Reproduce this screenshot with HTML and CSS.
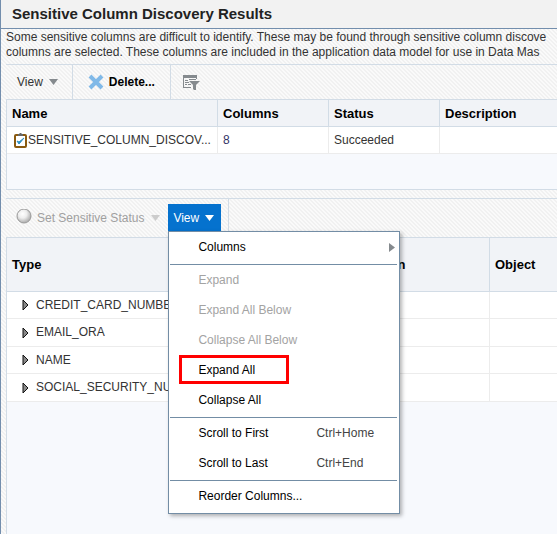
FILE: index.html
```html
<!DOCTYPE html>
<html lang="en">
<head>
<meta charset="utf-8">
<title>Sensitive Column Discovery Results</title>
<link rel="stylesheet" href="styles.css">
</head>
<body>
<main class="page">
  <header class="title-bar"><h1>Sensitive Column Discovery Results</h1></header>
  <p class="intro">Some sensitive columns are difficult to identify. These may be found through sensitive column discove<br>columns are selected. These columns are included in the application data model for use in Data Mas</p>

  <section class="panel">
    <div class="toolbar">
      <button class="tool tool-view" type="button">View
        <svg class="caret" width="9" height="6" viewBox="0 0 9 6" aria-hidden="true"><path d="M0 0h9L4.500 6z" fill="#858a8e"/></svg>
      </button>
      <button class="tool tool-delete" type="button">
        <svg width="16" height="16" viewBox="0 0 16 16" aria-hidden="true"><path d="M2 2l12 12M14 2L2 14" stroke="#80b9e8" stroke-width="4" fill="none"/></svg>
        Delete...
      </button>
      <button class="tool tool-filter" type="button" aria-label="Query by example">
        <svg width="17" height="16" viewBox="0 0 17 16" aria-hidden="true"><g fill="#858a8e"><path d="M0 1h14v3H0z"/><path d="M0 4h1v10H0zM13 4h1v1h-1zM0 13h8v1H0zM2 6h3v1H2zM6 5h7v1H6zM2 8h4v1H2zM2 10h2v1H2zM5 10h3v1H5z"/><path d="M6 7h11l-4 4v5h-2l-1-1v-4z"/></g></svg>
      </button>
    </div>
    <table class="grid jobs">
      <colgroup><col class="c-name"><col class="c-mid"><col class="c-mid"><col></colgroup>
      <thead><tr><th scope="col">Name</th><th scope="col">Columns</th><th scope="col">Status</th><th scope="col">Description</th></tr></thead>
      <tbody><tr>
        <td><div class="job">
          <svg width="13" height="15" viewBox="0 0 13 15" aria-hidden="true"><rect x="1" y="2" width="11" height="12" rx="1" fill="#fff" stroke="#8a5a10" stroke-width="2"/><path d="M4 3V1h1l1-1h1l1 1h1v2z" fill="#666"/><path d="M3 8l2 3 5-6-5 4z" fill="#2d8fc0" stroke="#2d8fc0"/></svg>
          <span>SENSITIVE_COLUMN_DISCOV...</span></div></td>
        <td><a href="#">8</a></td><td>Succeeded</td><td></td>
      </tr></tbody>
    </table>
    <div class="rest"></div>
  </section>

  <section class="panel results">
    <div class="toolbar toolbar-results">
      <button class="tool tool-status" type="button" disabled>
        <svg width="16" height="18" viewBox="0 0 16 18" aria-hidden="true"><defs><radialGradient id="ball" cx=".4" cy=".35" r=".6"><stop offset="0" stop-color="#fff"/><stop offset=".5" stop-color="#eee"/><stop offset="1" stop-color="#b5b5b5"/></radialGradient></defs><circle cx="8" cy="7" r="7" fill="url(#ball)" stroke="#999"/></svg>
        Set Sensitive Status
        <svg class="caret" width="9" height="6" viewBox="0 0 9 6" aria-hidden="true"><path d="M0 0h9L4.500 6z" fill="#ccc"/></svg>
      </button>
      <div class="menu-anchor">
        <button class="tool-open" type="button" aria-expanded="true">View
          <svg class="caret" width="9" height="6" viewBox="0 0 9 6" aria-hidden="true"><path d="M0 0h9L4.500 6z" fill="#fff"/></svg>
        </button>
        <div class="menu">
          <button type="button">Columns <svg class="more" width="6" height="9" viewBox="0 0 6 9" aria-hidden="true"><path d="M0 0v9l6-4.500z" fill="#858a8e"/></svg></button>
          <hr>
          <button type="button" disabled>Expand</button>
          <button type="button" disabled>Expand All Below</button>
          <button type="button" disabled>Collapse All Below</button>
          <button type="button" class="marked">Expand All</button>
          <button type="button">Collapse All</button>
          <hr>
          <button type="button"><span class="label">Scroll to First</span><kbd>Ctrl+Home</kbd></button>
          <button type="button"><span class="label">Scroll to Last</span><kbd>Ctrl+End</kbd></button>
          <hr>
          <button type="button">Reorder Columns...</button>
        </div>
      </div>
    </div>
    <table class="grid types">
      <colgroup><col class="c-type"><col class="c-desc"><col></colgroup>
      <thead><tr><th scope="col">Type</th><th scope="col">Description</th><th scope="col">Object</th></tr></thead>
      <tbody>
        <tr><td><div class="node"><svg width="7" height="12" viewBox="0 0 7 12" aria-hidden="true"><path d="M1 1v10l5-5z" fill="#888" stroke="#111"/></svg>CREDIT_CARD_NUMBER</div></td><td></td><td></td></tr>
        <tr><td><div class="node"><svg width="7" height="12" viewBox="0 0 7 12" aria-hidden="true"><path d="M1 1v10l5-5z" fill="#888" stroke="#111"/></svg>EMAIL_ORA</div></td><td></td><td></td></tr>
        <tr><td><div class="node"><svg width="7" height="12" viewBox="0 0 7 12" aria-hidden="true"><path d="M1 1v10l5-5z" fill="#888" stroke="#111"/></svg>NAME</div></td><td></td><td></td></tr>
        <tr><td><div class="node"><svg width="7" height="12" viewBox="0 0 7 12" aria-hidden="true"><path d="M1 1v10l5-5z" fill="#888" stroke="#111"/></svg>SOCIAL_SECURITY_NUMBER</div></td><td></td><td></td></tr>
      </tbody>
    </table>
    <div class="rest"></div>
  </section>
</main>
</body>
</html>
```
FILE: styles.css
```css
*, *::before { box-sizing: border-box; }

body {
  margin: 0;
  font: 12px/15px "Liberation Sans", Arial, sans-serif;
  color: #333;
}

svg { display: block; flex: none; }

button {
  font: inherit;
  color: #000;
  background: none;
  border: 0;
  padding: 0;
  display: flex;
  align-items: center;
  white-space: nowrap;
}

.page {
  display: flex;
  flex-direction: column;
  min-height: 100vh;
  overflow: hidden;
  border-left: 1px solid #738ead;
  background: linear-gradient(45deg, #f1f1f1 25%, #fafafa 25% 50%, #f1f1f1 50% 75%, #fafafa 75%) 0 0 / 4px 4px;
}

.title-bar {
  background: #f2f2f2;
  border-bottom: 1px solid #738ead;
}

h1 {
  margin: 0;
  padding: 0 11px;
  font-size: 15px;
  line-height: 27px;
  padding-bottom: 1px;
  color: #222;
}

.intro {
  margin: 0;
  padding: 1px 0 4px 5px;
  white-space: nowrap;
}

.panel {
  display: flex;
  flex-direction: column;
  margin-left: 5px;
  border-top: 1px solid #d2dce6;
}

.toolbar {
  display: flex;
  height: 34px;
}

.tool-view,
.tool-delete { border-right: 1px solid #d2dce6; }

.tool-view { padding: 0 14px 0 11px; gap: 6px; color: #333; }

.tool-delete { padding: 0 15px; gap: 5px; font-weight: bold; }

.tool-filter { padding-left: 12px; }

.grid {
  width: 100%;
  table-layout: fixed;
  border-collapse: separate;
  border-spacing: 0;
  border-left: 1px solid #d2dce6;
  border-top: 1px solid #d2dce6;
}

.c-name { width: 211px; }
.c-mid { width: 111px; }
.c-type { width: 322px; }
.c-desc { width: 161px; }

th, td {
  padding: 0 0 0 5px;
  text-align: left;
  white-space: nowrap;
  overflow: hidden;
}

th {
  height: 27px;
  font-size: 13px;
  color: #000;
  background: #f1f3f7;
  border-right: 1px solid #d2dce6;
  border-bottom: 1px solid #d2dce6;
}

td {
  height: 27px;
  background: #fff;
  border-right: 1px solid #ececec;
  border-bottom: 1px solid #ececec;
}

th:last-child, td:last-child { border-right: 0; }

td a { color: #333366; text-decoration: none; }

.job { display: flex; align-items: center; gap: 1px; padding-left: 2px; }

.rest {
  height: 36px;
  background: #f7f9fd;
  border-left: 1px solid #d2dce6;
  border-bottom: 1px solid #d2dce6;
}

.results { flex: 1; margin-top: 8px; }

.results .rest { flex: 1; height: auto; border-bottom: 0; }

.toolbar-results { height: 38px; }

.tool-status { gap: 5px; padding: 0 8px 0 10px; color: #a0a0a0; }

.tool-status .caret { margin-left: 2px; }

.menu-anchor {
  position: relative;
  padding: 5px 7px 0 0;
  border-right: 1px solid #d2dce6;
}

.tool-open {
  height: 28px;
  padding: 0 7px 0 5px;
  gap: 6px;
  color: #fff;
  background: #0572ce;
}

.menu {
  position: absolute;
  top: 32px;
  left: 0;
  width: 232px;
  padding-bottom: 2px;
  background: #fff;
  border: 1px solid #738da5;
  box-shadow: 2px 2px 4px rgba(0, 0, 0, .3);
}

.menu button {
  position: relative;
  width: 100%;
  height: 30px;
  padding: 0 4px 0 29px;
}

.menu button:disabled { color: #a3a3a3; }

.menu hr {
  margin: 2px 2px 0 1px;
  border: 0;
  border-top: 1px solid #738da5;
}

.more { margin-left: auto; }

.label { width: 118px; text-align: left; }

kbd { font: inherit; color: #444; }

.marked::before {
  content: "";
  position: absolute;
  top: 0;
  left: 10px;
  width: 110px;
  height: 29px;
  border: 3px solid #f00;
}

.types th { height: 54px; }

.node { display: flex; align-items: center; gap: 7px; padding-left: 10px; }

.types tr:nth-child(even) td { height: 28px; }
```
